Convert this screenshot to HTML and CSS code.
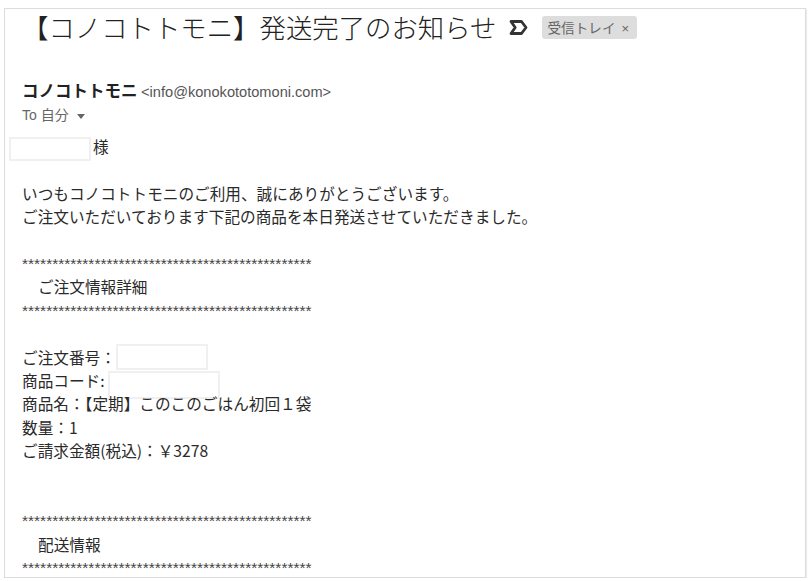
FILE: index.html
```html
<!DOCTYPE html>
<html>
  <head>
    <title>【コノコトトモニ】発送完了のお知らせ</title>
    <link rel="stylesheet" href="styles.css">
  </head>
  <body>
    <div class="mail">
      <!-- Subject line -->
      <div class="subject-row">
        <h1 class="subject">【コノコトトモニ】発送完了のお知らせ</h1>
        <svg class="important" width="19" height="15" viewBox="0 0 19 15">
          <path d="M2 1.5 H12.5 L17 7.5 L12.5 13.5 H2 L6.2 7.5 Z" fill="none" stroke="#333" stroke-width="2.8" stroke-linejoin="round" />
        </svg>
        <span class="label">受信トレイ<span class="label-x">×</span></span>
      </div>

      <!-- Sender -->
      <div class="sender">
        <span class="sender-name">コノコトトモニ</span>
        <span class="sender-mail">&lt;info@konokototomoni.com&gt;</span>
      </div>
      <div class="to">To 自分 <span class="caret"></span></div>

      <!-- Body -->
      <div class="body">
        <div class="line"><span class="blank blank-name"></span>様</div>
        <div class="line"></div>
        <div class="line">いつもコノコトトモニのご利用、誠にありがとうございます。</div>
        <div class="line">ご注文いただいております下記の商品を本日発送させていただきました。</div>
        <div class="line"></div>
        <div class="line stars">************************************************</div>
        <div class="line indent">ご注文情報詳細</div>
        <div class="line stars">************************************************</div>
        <div class="line"></div>
        <div class="line">ご注文番号：<span class="blank blank-order"></span></div>
        <div class="line">商品コード:<span class="blank blank-code"></span></div>
        <div class="line">商品名：【定期】このこのごはん初回１袋</div>
        <div class="line">数量：1</div>
        <div class="line">ご請求金額(税込)：￥3278</div>
        <div class="line"></div>
        <div class="line"></div>
        <div class="line stars">************************************************</div>
        <div class="line indent">配送情報</div>
        <div class="line stars">************************************************</div>
      </div>
    </div>
  </body>
</html>
```

FILE: styles.css
```css
body {
  margin: 0;
  background: #fff;
  font-family: "Noto Sans CJK JP", "Liberation Sans", sans-serif;
  color: #2a2a2a;
}

.mail {
  margin: 8px 5px 0 4px;
  height: 568px;
  border: 1px solid #dcdcdc;
  box-shadow: 1px 1px 1px #eee;
  padding-left: 17px;
  overflow: hidden;
}

/* Subject */
.subject-row {
  display: flex;
  align-items: center;
  height: 36px;
}

.subject {
  margin: 0;
  font-size: 26.4px;
  font-weight: 300;
  line-height: 36px;
  color: #222;
}

.important {
  margin-left: 12px;
  flex: none;
}

.label {
  margin-left: 14px;
  margin-top: 1px;
  height: 23px;
  line-height: 23px;
  padding: 0 8px 0 6px;
  background: #dddddd;
  border-radius: 3px;
  font-size: 13.6px;
  color: #666;
}

.label-x {
  margin-left: 6px;
  font-family: "Liberation Sans", sans-serif;
  font-size: 13px;
}

/* Sender */
.sender {
  margin-top: 33px;
  height: 24px;
  line-height: 24px;
}

.sender-name {
  font-size: 16.5px;
  font-weight: bold;
  color: #222;
}

.sender-mail {
  font-family: "Liberation Sans", sans-serif;
  font-size: 14.6px;
  color: #555;
}

.to {
  margin-top: 2px;
  height: 22px;
  line-height: 22px;
  font-family: "Liberation Sans", "Noto Sans CJK JP", sans-serif;
  font-size: 14px;
  color: #666;
}

.caret {
  display: inline-block;
  margin-left: 4px;
  vertical-align: middle;
  border-left: 4.5px solid transparent;
  border-right: 4.5px solid transparent;
  border-top: 5px solid #666;
}

/* Body */
.body {
  margin-top: 9px;
  font-size: 15.65px;
}

.line {
  height: 23.4px;
  line-height: 23.4px;
  white-space: nowrap;
}

.indent {
  padding-left: 16px;
}

.stars {
  font-family: "Liberation Sans", sans-serif;
  font-size: 15.5px;
  color: #444;
}

.blank {
  display: inline-block;
  height: 24px;
  margin: -2px 0;
  vertical-align: middle;
  border: 2px solid #f0f0f0;
  box-sizing: border-box;
  background: #fff;
}

.blank-name {
  width: 82px;
  margin-left: -13px;
  margin-right: 2px;
}

.blank-order {
  width: 92px;
  height: 26px;
  margin-top: -6px;
}

.blank-code {
  width: 112px;
  height: 28px;
  margin-left: 3px;
  margin-bottom: -6px;
}
```
